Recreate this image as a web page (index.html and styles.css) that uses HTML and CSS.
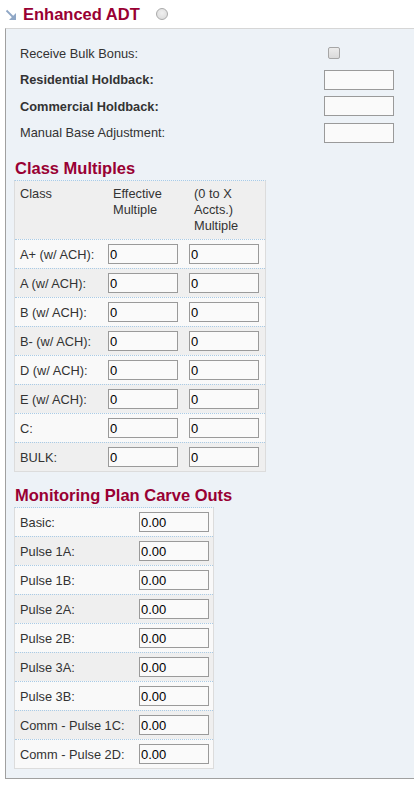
FILE: index.html
```html
<!DOCTYPE html>
<html>
<head>
<meta charset="utf-8">
<link rel="stylesheet" href="styles.css">
</head>
<body>
<div class="head">
  <svg class="head-icon" width="12" height="12" viewBox="0 0 12 12">
    <path d="M1.5 1.5 L9 9" stroke="#8fa7c6" stroke-width="1.8" fill="none"/>
    <path d="M4 11 L11 11 L11 4 Z" fill="#8fa7c6"/>
  </svg>
  <span class="title">Enhanced ADT</span>
  <span class="radio"></span>
</div>
<div class="panel">
  <div class="fields">
    <div class="field"><span class="lbl">Receive Bulk Bonus:</span><span class="ctl"><input type="checkbox" class="chk"></span></div>
    <div class="field"><span class="lbl bold">Residential Holdback:</span><span class="ctl"><input class="txt" type="text"></span></div>
    <div class="field"><span class="lbl bold">Commercial Holdback:</span><span class="ctl"><input class="txt" type="text"></span></div>
    <div class="field"><span class="lbl">Manual Base Adjustment:</span><span class="ctl"><input class="txt" type="text"></span></div>
  </div>
  <div class="section">
    <h2 class="sec-title first">Class Multiples</h2>
    <div class="grid multiples">
      <div class="row hdr"><div class="c1">Class</div><div class="c2 htxt">Effective<br>Multiple</div><div class="c3 htxt">(0 to X<br>Accts.)<br>Multiple</div></div>
      <div class="row odd"><div class="c1">A+ (w/ ACH):</div><div class="c2"><input class="txt" value="0"></div><div class="c3"><input class="txt" value="0"></div></div>
      <div class="row even"><div class="c1">A (w/ ACH):</div><div class="c2"><input class="txt" value="0"></div><div class="c3"><input class="txt" value="0"></div></div>
      <div class="row odd"><div class="c1">B (w/ ACH):</div><div class="c2"><input class="txt" value="0"></div><div class="c3"><input class="txt" value="0"></div></div>
      <div class="row even"><div class="c1">B- (w/ ACH):</div><div class="c2"><input class="txt" value="0"></div><div class="c3"><input class="txt" value="0"></div></div>
      <div class="row odd"><div class="c1">D (w/ ACH):</div><div class="c2"><input class="txt" value="0"></div><div class="c3"><input class="txt" value="0"></div></div>
      <div class="row even"><div class="c1">E (w/ ACH):</div><div class="c2"><input class="txt" value="0"></div><div class="c3"><input class="txt" value="0"></div></div>
      <div class="row odd"><div class="c1">C:</div><div class="c2"><input class="txt" value="0"></div><div class="c3"><input class="txt" value="0"></div></div>
      <div class="row even"><div class="c1">BULK:</div><div class="c2"><input class="txt" value="0"></div><div class="c3"><input class="txt" value="0"></div></div>
    </div>
    <h2 class="sec-title">Monitoring Plan Carve Outs</h2>
    <div class="grid carve">
      <div class="row odd"><div class="c1">Basic:</div><div class="c2"><input class="txt" value="0.00"></div></div>
      <div class="row even"><div class="c1">Pulse 1A:</div><div class="c2"><input class="txt" value="0.00"></div></div>
      <div class="row odd"><div class="c1">Pulse 1B:</div><div class="c2"><input class="txt" value="0.00"></div></div>
      <div class="row even"><div class="c1">Pulse 2A:</div><div class="c2"><input class="txt" value="0.00"></div></div>
      <div class="row odd"><div class="c1">Pulse 2B:</div><div class="c2"><input class="txt" value="0.00"></div></div>
      <div class="row even"><div class="c1">Pulse 3A:</div><div class="c2"><input class="txt" value="0.00"></div></div>
      <div class="row odd"><div class="c1">Pulse 3B:</div><div class="c2"><input class="txt" value="0.00"></div></div>
      <div class="row even"><div class="c1">Comm - Pulse 1C:</div><div class="c2"><input class="txt" value="0.00"></div></div>
      <div class="row odd"><div class="c1">Comm - Pulse 2D:</div><div class="c2"><input class="txt" value="0.00"></div></div>
    </div>
  </div>
</div>
</body>
</html>
```
FILE: styles.css
```css
html, body {
  margin: 0;
  padding: 0;
  background: #ffffff;
  font-family: "Liberation Sans", Arial, sans-serif;
  color: #333333;
}
.head {
  height: 28px;
  display: flex;
  align-items: center;
  padding-left: 4px;
  box-sizing: border-box;
}
.head-icon {
  margin-top: 2px;
  margin-left: 1px;
}
.title {
  margin-left: 6px;
  font-size: 16.5px;
  font-weight: bold;
  color: #990033;
}
.radio {
  margin-left: 16px;
  width: 10px;
  height: 10px;
  border-radius: 50%;
  border: 1px solid #aaaaaa;
  background: radial-gradient(circle at 50% 40%, #f0f0f0, #d8d8d8);
}
.panel {
  margin-left: 5px;
  border-left: 1px solid #a0a0a0;
  border-top: 1px solid #d6d6d6;
  border-bottom: 1px solid #a0a0a0;
  background: #edf2f7;
  padding-top: 11px;
  padding-bottom: 9px;
}
.fields {
  padding-left: 14px;
  padding-right: 20px;
}
.field {
  height: 26.5px;
  display: flex;
  align-items: center;
  font-size: 12.8px;
}
.lbl {
  flex: 1;
}
.bold {
  font-weight: bold;
}
.ctl {
  width: 70px;
  display: flex;
  align-items: center;
}
.chk {
  appearance: none;
  -webkit-appearance: none;
  width: 12px;
  height: 12px;
  margin: 0 0 0 4px;
  border: 1px solid #a6a6a6;
  border-radius: 2px;
  background: linear-gradient(#ececec, #dadada);
  box-sizing: border-box;
}
.txt {
  width: 70px;
  height: 20px;
  box-sizing: border-box;
  border: 1px solid #9a9a9a;
  background: #fafafa;
  margin: 0;
  padding: 0 1px;
  font-family: "Liberation Sans", Arial, sans-serif;
  font-size: 13px;
  color: #000000;
  outline: none;
}
.section {
  padding-left: 8px;
}
.sec-title {
  margin: 13px 0 2px 1px;
  font-size: 16.5px;
  line-height: 20px;
  font-weight: bold;
  color: #990033;
}
.sec-title.first {
  margin-top: 12px;
}
.grid {
  border: 1px solid #dcdcdc;
  border-top: 1px dotted #a9cbe6;
  font-size: 12.8px;
}
.multiples {
  width: 250px;
}
.carve {
  width: 198px;
}
.row {
  display: grid;
  align-items: center;
  height: 29px;
  box-sizing: border-box;
  border-top: 1px dotted #a9cbe6;
}
.row:first-child {
  border-top: none;
  height: 28px;
}
.multiples .row {
  grid-template-columns: 89px 81px 80px;
}
.carve .row {
  grid-template-columns: 120px 78px;
}
.row.hdr {
  height: 58px;
  align-items: start;
  padding-top: 5px;
  line-height: 16px;
}
.row.odd {
  background: #f9f9f9;
}
.row.even, .row.hdr {
  background: #efefef;
}
.c1 {
  padding-left: 5px;
  white-space: nowrap;
}
.c2, .c3 {
  padding-left: 4px;
  display: flex;
  align-items: center;
}
.htxt {
  display: block;
  padding-left: 9px;
}
```
